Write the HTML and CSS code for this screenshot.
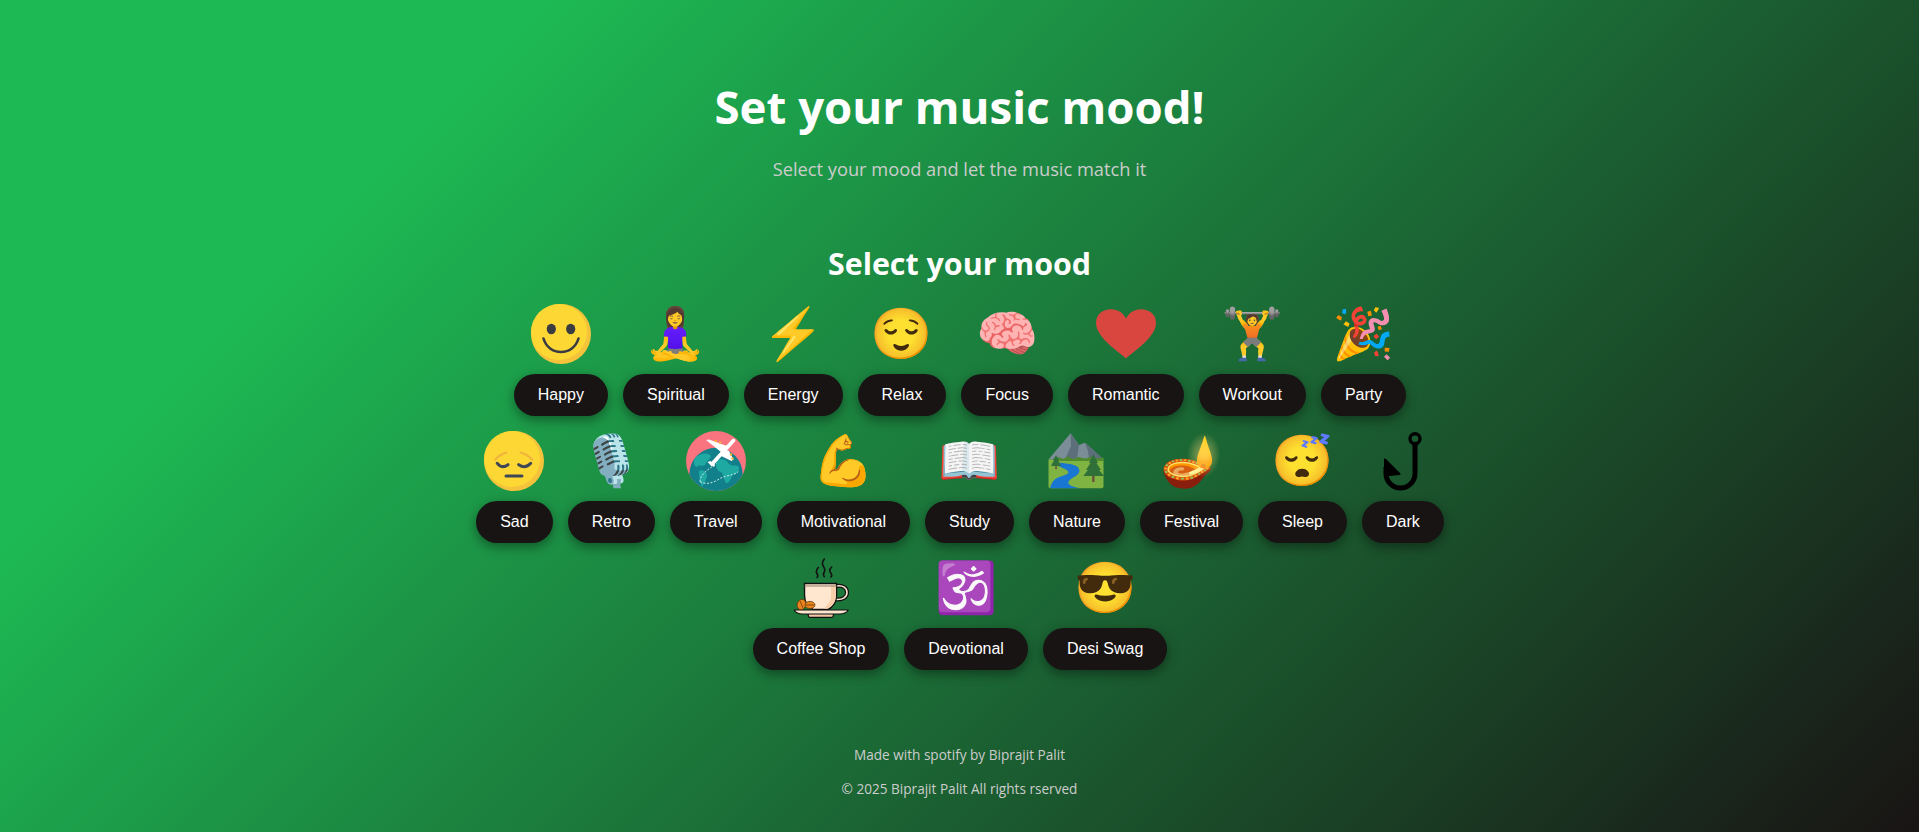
FILE: index.html
```html
<!DOCTYPE html>
<html lang="en">
<head>
<meta charset="utf-8">
<title>Set your music mood!</title>
<link rel="stylesheet" href="styles.css">
</head>
<body>
<header class="hero">
  <h1>Set your music mood!</h1>
  <p>Select your mood and let the music match it</p>
</header>
<main class="moods">
  <h2>Select your mood</h2>
  <div class="grid">
    <div class="item"><div class="icon"><svg viewBox="0 0 60 60"><circle cx="30" cy="30" r="30" fill="#f5c33b"/><circle cx="28" cy="28" r="28" fill="#fdd835"/><ellipse cx="20.3" cy="25" rx="4.6" ry="5.2" fill="#3a3c42"/><ellipse cx="39.7" cy="25" rx="4.6" ry="5.2" fill="#3a3c42"/><path d="M12.5 34.5C15 43 22 48 30 48C38 48 45 43 47.5 34.5" fill="none" stroke="#3a3c42" stroke-width="2.6" stroke-linecap="round"/></svg></div><button>Happy</button></div>
    <div class="item"><div class="icon">🧘‍♀️</div><button>Spiritual</button></div>
    <div class="item"><div class="icon">⚡</div><button>Energy</button></div>
    <div class="item"><div class="icon">😌</div><button>Relax</button></div>
    <div class="item"><div class="icon">🧠</div><button>Focus</button></div>
    <div class="item"><div class="icon"><svg viewBox="0 0 60 60"><path d="M30 54.5C26 50 0 34 0 19C0 10 7 5.3 15 5.3C22 5.3 27 9 30 14.5C33 9 38 5.3 45 5.3C53 5.3 60 10 60 19C60 34 34 50 30 54.5Z" fill="#d9463f"/></svg></div><button>Romantic</button></div>
    <div class="item"><div class="icon">🏋️</div><button>Workout</button></div>
    <div class="item"><div class="icon">🎉</div><button>Party</button></div>
    <div class="item"><div class="icon"><svg viewBox="0 0 60 60"><circle cx="30" cy="30" r="30" fill="#f5c33b"/><circle cx="28" cy="28" r="28" fill="#fdd835"/><path d="M11.3 28.3Q16.7 23 22.3 21.7M36.7 21.7Q42.7 23 48 28.3" fill="none" stroke="#f2b53c" stroke-width="2.4" stroke-linecap="round"/><path d="M13.3 32.3Q18 38.3 24 33.7M34.7 33.7Q41.3 38.3 46.7 32.3" fill="none" stroke="#3f4756" stroke-width="3" stroke-linecap="round"/><path d="M22 45H38" stroke="#3f4756" stroke-width="3" stroke-linecap="round"/></svg></div><button>Sad</button></div>
    <div class="item"><div class="icon">🎙️</div><button>Retro</button></div>
    <div class="item"><div class="icon"><svg viewBox="0 0 60 60"><defs><clipPath id="disc"><circle cx="30" cy="30" r="30"/></clipPath></defs><circle cx="30" cy="30" r="30" fill="#f9747f"/><g clip-path="url(#disc)"><circle cx="30" cy="43.4" r="26.7" fill="#12808a"/><path d="M9 27C14 22 22 21 25 25C24 29 20 30 19 34C15 36 13 33 11 36C8 35 7 31 9 27Z" fill="#1eaaa3"/><path d="M13 40C17 38 21 41 21 45C20 50 18 53 16 56C14 52 13 46 13 40Z" fill="#1eaaa3"/><path d="M31 29C36 27 41 29 43 33C46 36 50 33 53 36C53 41 50 44 46 44C45 49 42 53 40 52C37 48 38 43 35 41C31 40 29 36 31 29Z" fill="#1eaaa3"/><path d="M14 50.7C22 55 30 50 35 47C41 44 47 45 52.3 40.7M14 50.7C14 43 23 38 30.7 32.3" fill="none" stroke="#fff" stroke-width=".8" stroke-dasharray="2 1.6"/></g><path d="M20 9L23 8.5L41 15L35 21ZM38 18L43 20L47.5 28.5L45.5 30L33 24ZM21.5 31L24.5 30L29 34L28 36L24.5 34Z" fill="#fff"/><path d="M26 33L47.5 9.5" stroke="#fff" stroke-width="3.8" stroke-linecap="round"/><circle cx="29.5" cy="10" r="1.2" fill="#f9b233"/><circle cx="34" cy="11.5" r="1.2" fill="#f9b233"/><circle cx="45" cy="23.5" r="1.2" fill="#f9b233"/><circle cx="46.5" cy="27.5" r="1.2" fill="#f9b233"/></svg></div><button>Travel</button></div>
    <div class="item"><div class="icon">💪</div><button>Motivational</button></div>
    <div class="item"><div class="icon">📖</div><button>Study</button></div>
    <div class="item"><div class="icon"><svg viewBox="0 0 60 60"><path d="M1.5 28.5L12 16L23.7 2.3L32 14L38 11.7L56.5 28.5Z" fill="#7b8d97"/><path d="M23.7 2.3L32 14L30 28.5H18L24 15Z" fill="#5d6f7a"/><path d="M38 11.7L46 18.5L56.5 28.5H42L41 20Z" fill="#5d6f7a"/><path d="M1.5 28.5H56.5V55.3A2 2 0 0 1 54.5 57.3H3.5A2 2 0 0 1 1.5 55.3Z" fill="#7fb342"/><path d="M8 28.5L12 26L16 28L21 25.5L26 28L32 26L38 27.5L44 26L50 27.5L56.5 26.5V30H8Z" fill="#4f8a2f"/><path d="M13 31.7C20 32.5 30 33.5 31.3 36.7C32.5 39 33.5 41 30 44C27 46.5 22 48 21.3 51.7C21.5 54.5 27 56 33 57.3H3C4 53 6 50 8 48.3C12 45 21 44 21.3 41.7C21.5 39 18 38 11.3 35Z" fill="#1976d2"/><path d="M46.3 23.3L51 32H49.5L54 39H52L57 45H36.3L41 39H39L43.5 32H42Z" fill="#2e7038"/><path d="M45.2 45H47.5V51H45.2Z" fill="#6b4a3a"/><path d="M9 24.3L12 29H11L14 35H4L7 29H6Z" fill="#2e7038"/><path d="M8.3 35H9.8V38.3H8.3Z" fill="#6b4a3a"/></svg></div><button>Nature</button></div>
    <div class="item"><div class="icon">🪔</div><button>Festival</button></div>
    <div class="item"><div class="icon">😴</div><button>Sleep</button></div>
    <div class="item"><div class="icon"><svg viewBox="0 0 60 60"><circle cx="42" cy="7.7" r="5" fill="none" stroke="#000" stroke-width="3.4"/><path d="M42 13V42.5A14.5 14.5 0 0 1 13 42.5V36" fill="none" stroke="#000" stroke-width="5"/><path d="M12 28.5L26.5 43L12 44.5Z" fill="#000" stroke="#000" stroke-width="2" stroke-linejoin="round"/></svg></div><button>Dark</button></div>
    <div class="item"><div class="icon"><svg viewBox="0 0 60 60"><path d="M27.3 9.5C25 12 25 14 26 15.5C27 17 27 18.5 26 19.5M33.3 1C31 4 31 6.5 32.5 8.5C34 10.5 34 13 32.8 15C32 16.5 32.5 17.5 33.3 18.7M40.7 9C38.5 11 38.5 13.5 39.8 15C41 16.5 41 17.8 40 19" fill="none" stroke="#111" stroke-width="1.6" stroke-linecap="round"/><path d="M45.5 28C52 27 56 30 56 34.5C56 39 52 42 45 41.5" fill="none" stroke="#111" stroke-width="4"/><path d="M45.5 28C52 27 56 30 56 34.5C56 39 52 42 45 41.5" fill="none" stroke="#ffe6cf" stroke-width="1.6"/><path d="M13.5 25.5H45.5V37C45.5 44 42 49 37 51.5H22C17 49 13.5 44 13.5 37Z" fill="#ffe6cf" stroke="#111" stroke-width="1.4"/><path d="M40 27H45V37C45 43 42 48 37 50.5H33C37 47 40 43 40 37Z" fill="#f8cfa8"/><path d="M13.5 28H45.5" stroke="#8a7a6a" stroke-width="1"/><path d="M17.3 55.5H42.3V58C42.3 59 41.5 59.3 40.5 59.3H19C18 59.3 17.3 59 17.3 58Z" fill="#f3c9a5" stroke="#111" stroke-width="1.2"/><path d="M3.5 52H57C57 54 53 56 48 56H12C7 56 3.5 54 3.5 52Z" fill="#ffe6cf" stroke="#111" stroke-width="1.2"/><ellipse cx="10.5" cy="46.5" rx="4.3" ry="5.2" transform="rotate(20 10.5 46.5)" fill="#e8831f" stroke="#6b3d0a" stroke-width=".8"/><ellipse cx="19" cy="47" rx="5" ry="3.6" fill="#e8831f" stroke="#6b3d0a" stroke-width=".8"/><path d="M9 43L12 50M15 47H23" stroke="#6b3d0a" stroke-width=".8"/></svg></div><button>Coffee Shop</button></div>
    <div class="item"><div class="icon">🕉️</div><button>Devotional</button></div>
    <div class="item"><div class="icon">😎</div><button>Desi Swag</button></div>
  </div>
</main>
<footer class="foot">
  <p>Made with spotify by Biprajit Palit</p>
  <p>© 2025 Biprajit Palit All rights rserved</p>
</footer>
</body>
</html>
```
FILE: styles.css
```css
* { box-sizing: border-box; }
html, body { height: 100%; }
body {
  margin: 0;
  min-height: 832px;
  background: linear-gradient(135deg, #1db954 20%, #191414);
  color: #fff;
  font-family: "Open Sans", sans-serif;
  text-align: center;
  overflow: hidden;
}
.hero { padding-top: 76px; }
.hero h1 { margin: 0; font-size: 45.6px; line-height: 60px; font-weight: 700; }
.hero p { margin: 21px 0 0; font-size: 18.25px; line-height: 24px; color: #ccc; }
.moods { margin-top: 63px; }
.moods h2 { margin: 0 0 20px; font-size: 30.4px; line-height: 40px; font-weight: 700; }
.grid { width: 976px; padding-left: 1px; margin: 0 auto; display: flex; flex-wrap: wrap; justify-content: center; gap: 15px; }
.item { display: flex; flex-direction: column; align-items: center; gap: 10px; }
.icon {
  display: flex; justify-content: center;
  width: 60px; height: 60px;
  font-size: 50px; line-height: 60px;
  font-family: "Noto Color Emoji", "Noto Sans", sans-serif;
}
.icon svg { display: block; flex: none; width: 60px; height: 60px; }
button {
  height: 42px; padding: 0 24px; border: 0; border-radius: 25px;
  background: #191414; color: #fff; font: 16px "Liberation Sans", Arial, sans-serif;
  box-shadow: 0 4px 12px rgba(0,0,0,.4);
}
.foot { margin-top: 76px; font-size: 13.6px; color: #ccc; }
.foot p { margin: 0 0 16px; line-height: 18px; }
```
